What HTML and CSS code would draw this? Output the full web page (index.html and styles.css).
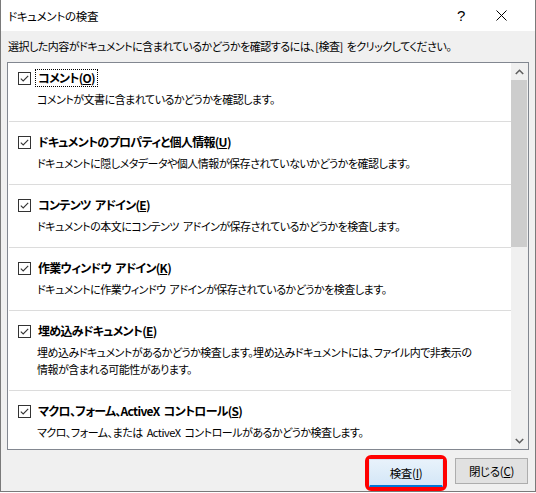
FILE: index.html
```html
<!DOCTYPE html>
<html lang="ja">
<head>
<meta charset="utf-8">
<title>ドキュメントの検査</title>
<link rel="stylesheet" href="styles.css">
</head>
<body>
<div class="window">
  <div class="titlebar">
    <span class="title">ドキュメントの検査</span>
    <span class="help">?</span>
    <span class="close">
      <svg width="11" height="11" viewBox="0 0 11 11"><path d="M0.5 0.5 L10.5 10.5 M10.5 0.5 L0.5 10.5" stroke="#000" stroke-width="1" fill="none"/></svg>
    </span>
  </div>
  <div class="content">
    <p class="intro">選択した内容がドキュメントに含まれているかどうかを確認するには、[検査] をクリックしてください。</p>
    <div class="listbox">
      <div class="items">
        <div class="item first">
          <div class="head">
            <span class="cb"><svg width="13" height="13" viewBox="0 0 13 13"><rect x="0.5" y="0.5" width="12" height="12" fill="#fff" stroke="#333"/><path d="M2.8 6.6 L5.2 9 L10.2 3.8" stroke="#333" stroke-width="1.1" fill="none"/></svg></span>
            <span class="label focus">コメント(<u>O</u>)</span>
          </div>
          <div class="desc">コメントが文書に含まれているかどうかを確認します。</div>
        </div>
        <div class="item">
          <div class="head">
            <span class="cb"><svg width="13" height="13" viewBox="0 0 13 13"><rect x="0.5" y="0.5" width="12" height="12" fill="#fff" stroke="#333"/><path d="M2.8 6.6 L5.2 9 L10.2 3.8" stroke="#333" stroke-width="1.1" fill="none"/></svg></span>
            <span class="label">ドキュメントのプロパティと個人情報(<u>U</u>)</span>
          </div>
          <div class="desc">ドキュメントに隠しメタデータや個人情報が保存されていないかどうかを確認します。</div>
        </div>
        <div class="item">
          <div class="head">
            <span class="cb"><svg width="13" height="13" viewBox="0 0 13 13"><rect x="0.5" y="0.5" width="12" height="12" fill="#fff" stroke="#333"/><path d="M2.8 6.6 L5.2 9 L10.2 3.8" stroke="#333" stroke-width="1.1" fill="none"/></svg></span>
            <span class="label">コンテンツ アドイン(<u>E</u>)</span>
          </div>
          <div class="desc">ドキュメントの本文にコンテンツ アドインが保存されているかどうかを検査します。</div>
        </div>
        <div class="item">
          <div class="head">
            <span class="cb"><svg width="13" height="13" viewBox="0 0 13 13"><rect x="0.5" y="0.5" width="12" height="12" fill="#fff" stroke="#333"/><path d="M2.8 6.6 L5.2 9 L10.2 3.8" stroke="#333" stroke-width="1.1" fill="none"/></svg></span>
            <span class="label">作業ウィンドウ アドイン(<u>K</u>)</span>
          </div>
          <div class="desc">ドキュメントに作業ウィンドウ アドインが保存されているかどうかを検査します。</div>
        </div>
        <div class="item">
          <div class="head">
            <span class="cb"><svg width="13" height="13" viewBox="0 0 13 13"><rect x="0.5" y="0.5" width="12" height="12" fill="#fff" stroke="#333"/><path d="M2.8 6.6 L5.2 9 L10.2 3.8" stroke="#333" stroke-width="1.1" fill="none"/></svg></span>
            <span class="label">埋め込みドキュメント(<u>E</u>)</span>
          </div>
          <div class="desc">埋め込みドキュメントがあるかどうか検査します。埋め込みドキュメントには、ファイル内で非表示の<br>情報が含まれる可能性があります。</div>
        </div>
        <div class="item">
          <div class="head">
            <span class="cb"><svg width="13" height="13" viewBox="0 0 13 13"><rect x="0.5" y="0.5" width="12" height="12" fill="#fff" stroke="#333"/><path d="M2.8 6.6 L5.2 9 L10.2 3.8" stroke="#333" stroke-width="1.1" fill="none"/></svg></span>
            <span class="label">マクロ、フォーム、ActiveX コントロール(<u>S</u>)</span>
          </div>
          <div class="desc">マクロ、フォーム、または ActiveX コントロールがあるかどうか検査します。</div>
        </div>
      </div>
      <div class="scrollbar">
        <div class="arrow"><svg width="9" height="6" viewBox="0 0 9 6"><path d="M0.8 5 L4.5 1.3 L8.2 5" stroke="#606060" stroke-width="1.6" fill="none"/></svg></div>
        <div class="thumb"></div>
        <div class="track"></div>
        <div class="arrow"><svg width="9" height="6" viewBox="0 0 9 6"><path d="M0.8 1 L4.5 4.7 L8.2 1" stroke="#606060" stroke-width="1.6" fill="none"/></svg></div>
      </div>
    </div>
    <div class="buttons">
      <span class="highlight"><button class="btn default">検査(<u>I</u>)</button></span>
      <button class="btn">閉じる(<u>C</u>)</button>
    </div>
  </div>
</div>
</body>
</html>
```

FILE: styles.css
```css
html, body {
  margin: 0;
  padding: 0;
  background: #ffffff;
}
body {
  width: 536px;
  height: 493px;
  overflow: hidden;
  font-family: "Noto Sans CJK JP", "Noto Sans", sans-serif;
  font-size: 11px;
  letter-spacing: -0.5px;
  word-spacing: 2px;
  color: #000;
  font-feature-settings: "palt";
}
.window {
  box-sizing: border-box;
  width: 536px;
  height: 492px;
  border-left: 1px solid #7a7a7a;
  border-right: 1px solid #7a7a7a;
  border-bottom: 1px solid #7a7a7a;
  display: flex;
  flex-direction: column;
}
.titlebar {
  height: 31px;
  background: #fff;
  display: flex;
  align-items: center;
  padding-left: 7px;
}
.title {
  font-size: 11.5px;
  letter-spacing: -0.3px;
  flex: 1;
}
.help {
  font-family: "Liberation Sans", sans-serif;
  font-size: 15px;
  letter-spacing: 0;
  width: 10px;
  margin-right: 29px;
}
.close {
  display: flex;
  margin-right: 28px;
}
.content {
  flex: 1;
  background: #f0f0f0;
  padding: 7px 6px 0 6px;
}
.intro {
  margin: 0 0 8px 1px;
  line-height: 16px;
  white-space: nowrap;
}
.listbox {
  box-sizing: border-box;
  height: 388px;
  border: 1px solid #828790;
  background: #fff;
  display: flex;
}
.items {
  flex: 1;
  overflow: hidden;
}
.item {
  padding: 12px 0 12px 9px;
  border-top: 1px solid #dcdcdc;
  margin-left: 1px;
}
.item.first {
  border-top: none;
  padding-top: 7px;
  padding-bottom: 13px;
}
.head {
  display: flex;
  align-items: center;
  height: 16px;
}
.cb {
  display: flex;
  width: 13px;
  height: 13px;
  margin-right: 4px;
}
.label {
  font-size: 12px;
  letter-spacing: -0.7px;
  font-weight: bold;
  padding: 1px 2px;
  border: 1px dotted transparent;
  line-height: 14px;
  white-space: nowrap;
}
.label.focus {
  border-color: #000;
}
.desc {
  margin-top: 5px;
  padding-left: 19px;
  line-height: 17px;
  white-space: nowrap;
}
.scrollbar {
  width: 17px;
  display: flex;
  flex-direction: column;
  background: #f0f0f0;
}
.arrow {
  height: 17px;
  display: flex;
  align-items: center;
  justify-content: center;
}
.thumb {
  height: 167px;
  background: #cdcdcd;
  margin-right: 1px;
}
.track {
  flex: 1;
}
.buttons {
  display: flex;
  justify-content: flex-end;
  align-items: flex-start;
  margin-top: 5px;
  padding-right: 1px;
}
.highlight {
  display: flex;
  border: 4px solid #ff0000;
  border-radius: 6px;
  margin-right: 8px;
}
.btn {
  box-sizing: border-box;
  width: 73px;
  height: 26px;
  font-family: "Noto Sans CJK JP", "Noto Sans", sans-serif;
  font-size: 11.5px;
  letter-spacing: -0.3px;
  font-feature-settings: "palt";
  color: #000;
  background: #e1e1e1;
  border: 1px solid #adadad;
  padding: 0;
  margin-top: 3px;
}
.btn.default {
  width: 74px;
  height: 28px;
  margin-top: 0;
  background: linear-gradient(#e8f2fb, #d4e7f7);
  border: 1px solid #cfe3f5;
  border-bottom: 2px solid #0078d7;
}
```
